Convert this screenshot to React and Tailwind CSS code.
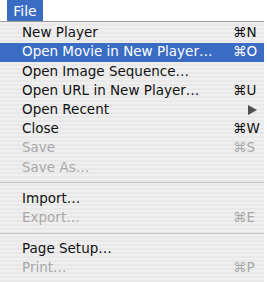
const items = [
  { label: "New Player", key: "N" },
  { label: "Open Movie in New Player…", key: "O", active: true },
  { label: "Open Image Sequence…" },
  { label: "Open URL in New Player…", key: "U" },
  { label: "Open Recent", submenu: true },
  { label: "Close", key: "W" },
  { label: "Save", key: "S", disabled: true },
  { label: "Save As…", disabled: true },
  { sep: true },
  { label: "Import…" },
  { label: "Export…", key: "E", disabled: true },
  { sep: true },
  { label: "Page Setup…" },
  { label: "Print…", key: "P", disabled: true },
]

function MenuRow({ item }) {
  if (item.sep) {
    return (
      <div className="h-[12px] flex items-center">
        <div className="w-full h-px bg-[#c4c4c4]" />
      </div>
    )
  }
  const color = item.active
    ? "bg-[#3a6cc4] text-white"
    : item.disabled
      ? "text-[#a8a8a8]"
      : "text-[#111]"
  return (
    <div className={`h-[19.2px] flex items-center pl-[22px] ${color}`}>
      <span className="flex-1 whitespace-nowrap">{item.label}</span>
      <span className="w-[31px] flex items-center">
        {item.key && <span>⌘{item.key}</span>}
        {item.submenu && (
          <svg width="9" height="10" viewBox="0 0 9 10" className="ml-[15px]">
            <path d="M0 0 L9 5 L0 10 Z" fill="#505050" />
          </svg>
        )}
      </span>
    </div>
  )
}

export default function App() {
  return (
    <div
      className="w-[267px] h-[282px] bg-white overflow-hidden text-[13.5px] leading-none"
      style={{ fontFamily: '"DejaVu Sans", sans-serif' }}
    >
      {/* menu bar */}
      <div className="h-[21px] flex">
        <div className="ml-[7px] w-[36px] h-full bg-[#3a6cc4] text-white text-[14px] flex items-center justify-center">
          File
        </div>
      </div>

      {/* dropdown */}
      <div className="w-[264px] h-[261px] border-t border-[#9c9c9c] pt-[1.4px] bg-[repeating-linear-gradient(to_bottom,#efefef_0px,#efefef_2px,#e8e8e8_2px,#e8e8e8_4px)]">
        {items.map((item, i) => (
          <MenuRow key={i} item={item} />
        ))}
      </div>
    </div>
  )
}
